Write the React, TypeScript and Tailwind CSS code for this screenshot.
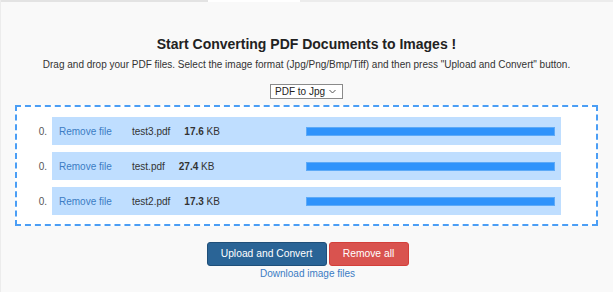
import React from 'react'

const files = [
  { name: 'test3.pdf', size: '17.6' },
  { name: 'test.pdf', size: '27.4' },
  { name: 'test2.pdf', size: '17.3' },
]

export default function App() {
  return (
    <div className="relative w-[613px] h-[292px] overflow-hidden bg-[#f9f9f9] font-['Liberation_Sans',Arial,sans-serif] text-[#333]">
      {/* top edge */}
      <div className="flex h-[2px]">
        <div className="w-[208px] bg-[#e3e3e3]" />
        <div className="w-[92px] bg-white" />
        <div className="flex-1 bg-[#ececec]" />
      </div>
      <div className="absolute left-0 top-0 bottom-0 w-px bg-[#ececec]" />

      <div className="flex flex-col items-center pt-[32px]">
        <h1 className="text-[14px] leading-[20px] font-bold text-[#222]">
          Start Converting PDF Documents to Images !
        </h1>
        <p className="mt-[4px] text-[10px] leading-[14px] text-[#333]">
          Drag and drop your PDF files. Select the image format (Jpg/Png/Bmp/Tiff) and then press "Upload and Convert" button.
        </p>

        <div className="mt-[12px] flex h-[15px] w-[73px] items-center justify-between border border-[#8a8a8a] bg-white pl-[4px] pr-[6px] text-[10px] leading-none text-[#222]">
          <span>PDF to Jpg</span>
          <svg width="7" height="5" viewBox="0 0 7 5" fill="none" stroke="#555" strokeWidth="1">
            <path d="M0.5 1 L3.5 4 L6.5 1" />
          </svg>
        </div>

        {/* drop zone */}
        <div className="mt-[6px] w-[583px] border-2 border-dashed border-[#4b9ef5] bg-white pt-[10px] pb-[9px] pr-[35px]">
          <div className="flex flex-col gap-[7px]">
            {files.map((f) => (
              <div key={f.name} className="flex items-center">
                <span className="w-[35px] text-right pr-[5px] text-[10px] text-[#555]">0.</span>
                <div className="flex h-[28px] flex-1 items-center bg-[#bfdeff] pl-[7px] pr-[6px] text-[10px]">
                  <div className="flex w-[247px] items-center">
                    <span className="w-[73px] text-[#3b7cc4]">Remove file</span>
                    <span className="mr-[14px] text-[#333]">{f.name}</span>
                    <span className="text-[#333]">
                      <b>{f.size}</b> KB
                    </span>
                  </div>
                  <div className="h-[9px] flex-1 border border-[#5eaaf7] bg-[#2f93fb]" />
                </div>
              </div>
            ))}
          </div>
        </div>

        <div className="mt-[16px] flex gap-[2px] pl-[2px]">
          <button className="h-[24px] w-[120px] rounded-[3px] border border-[#1f4f79] bg-[#2a6496] text-[10.3px] text-white">
            Upload and Convert
          </button>
          <button className="h-[24px] w-[80px] rounded-[3px] border border-[#d43f3a] bg-[#d9534f] text-[10.3px] text-white">
            Remove all
          </button>
        </div>
        <a className="mt-[1px] ml-[2px] text-[10px] leading-[14px] text-[#3b7cc4]">Download image files</a>
      </div>
    </div>
  )
}
